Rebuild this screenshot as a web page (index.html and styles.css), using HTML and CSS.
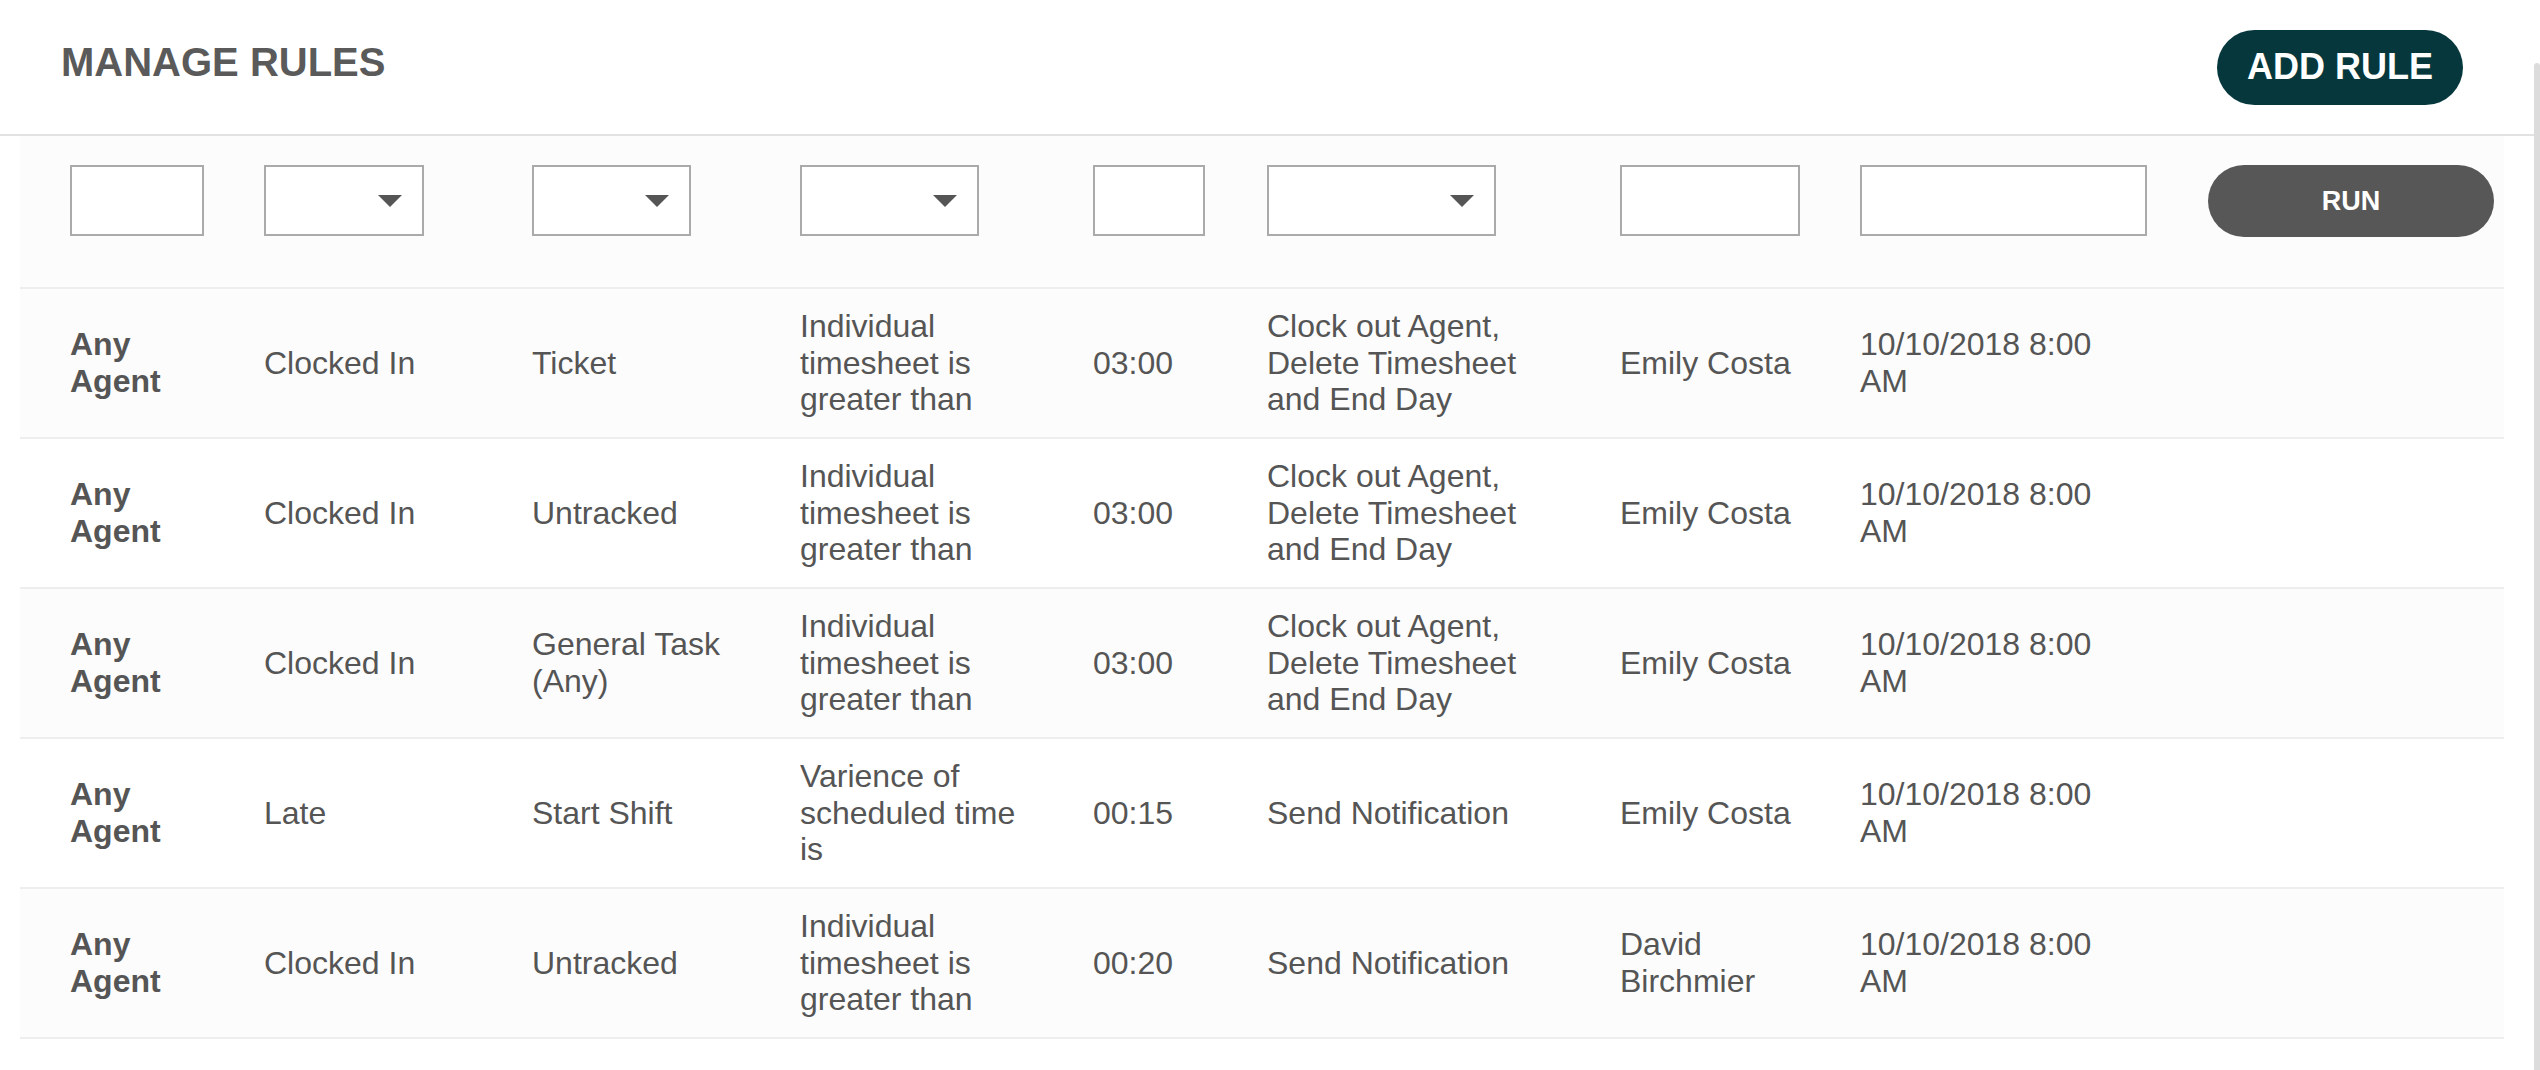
FILE: index.html
```html
<!DOCTYPE html>
<html lang="en">
<head>
    <meta charset="UTF-8">
    <meta name="viewport" content="width=device-width, initial-scale=1.0">
    <title>Manage Rules</title>
    <link rel="stylesheet" href="styles.css">
</head>
<body>
    <div class="page">
        <header class="page-header">
            <h1>MANAGE RULES</h1>
            <button class="add-btn">ADD RULE</button>
        </header>

        <main class="rules">
            <div class="rule-row filters">
                <input type="text" class="field f-agent">
                <span class="select-wrap f-status"><select class="field"></select></span>
                <span class="select-wrap f-type"><select class="field"></select></span>
                <span class="select-wrap f-cond"><select class="field"></select></span>
                <input type="text" class="field f-time">
                <span class="select-wrap f-action"><select class="field"></select></span>
                <input type="text" class="field f-user">
                <input type="text" class="field f-date">
                <button class="run-btn">RUN</button>
            </div>

            <div class="rule-row">
                <div class="cell agent">Any Agent</div>
                <div class="cell">Clocked In</div>
                <div class="cell">Ticket</div>
                <div class="cell">Individual timesheet is greater than</div>
                <div class="cell">03:00</div>
                <div class="cell">Clock out Agent, Delete Timesheet and End Day</div>
                <div class="cell">Emily Costa</div>
                <div class="cell date">10/10/2018 8:00 AM</div>
            </div>

            <div class="rule-row">
                <div class="cell agent">Any Agent</div>
                <div class="cell">Clocked In</div>
                <div class="cell">Untracked</div>
                <div class="cell">Individual timesheet is greater than</div>
                <div class="cell">03:00</div>
                <div class="cell">Clock out Agent, Delete Timesheet and End Day</div>
                <div class="cell">Emily Costa</div>
                <div class="cell date">10/10/2018 8:00 AM</div>
            </div>

            <div class="rule-row">
                <div class="cell agent">Any Agent</div>
                <div class="cell">Clocked In</div>
                <div class="cell">General Task (Any)</div>
                <div class="cell">Individual timesheet is greater than</div>
                <div class="cell">03:00</div>
                <div class="cell">Clock out Agent, Delete Timesheet and End Day</div>
                <div class="cell">Emily Costa</div>
                <div class="cell date">10/10/2018 8:00 AM</div>
            </div>

            <div class="rule-row">
                <div class="cell agent">Any Agent</div>
                <div class="cell">Late</div>
                <div class="cell">Start Shift</div>
                <div class="cell">Varience of scheduled time is</div>
                <div class="cell">00:15</div>
                <div class="cell">Send Notification</div>
                <div class="cell">Emily Costa</div>
                <div class="cell date">10/10/2018 8:00 AM</div>
            </div>

            <div class="rule-row">
                <div class="cell agent">Any Agent</div>
                <div class="cell">Clocked In</div>
                <div class="cell">Untracked</div>
                <div class="cell">Individual timesheet is greater than</div>
                <div class="cell">00:20</div>
                <div class="cell">Send Notification</div>
                <div class="cell">David Birchmier</div>
                <div class="cell date">10/10/2018 8:00 AM</div>
            </div>
        </main>
    </div>
    <div class="scroll-thumb"></div>
</body>
</html>
```

FILE: styles.css
```css
body {
    margin: 0;
    background: #ffffff;
    color: #555555;
    font-family: "Liberation Sans", Arial, Helvetica, sans-serif;
}
.page {
    margin-right: 6px;
}
.page-header {
    display: flex;
    justify-content: space-between;
    align-items: center;
    height: 134px;
    padding: 0 71px 0 61px;
    border-bottom: 2px solid #e2e2e2;
}
.page-header h1 {
    margin: 0 0 10px 0;
    font-size: 40px;
    line-height: 1;
    font-weight: 700;
    color: #5a5a5a;
}
.add-btn {
    width: 246px;
    height: 75px;
    border: none;
    border-radius: 38px;
    background-color: #05373d;
    color: #ffffff;
    font-family: inherit;
    font-size: 36px;
    font-weight: 700;
    padding: 0;
}
.rules {
    margin: 0 30px 0 20px;
}
.rule-row {
    display: grid;
    grid-template-columns: 194px 268px 268px 293px 174px 353px 240px 348px 286px;
    align-items: center;
    box-sizing: border-box;
    height: 150px;
    padding-left: 50px;
    border-bottom: 2px solid #eeeeee;
}
.rules > .rule-row:nth-child(even) {
    background: #fcfcfc;
}
.filters {
    height: 153px;
    padding-top: 29px;
    padding-bottom: 51px;
    align-items: start;
    background: #fcfcfc;
}
.field {
    display: block;
    box-sizing: border-box;
    height: 71px;
    margin: 0;
    border: 2px solid #aaaaaa;
    border-radius: 0;
    background: #ffffff;
    -webkit-appearance: none;
    appearance: none;
    outline: none;
}
.select-wrap {
    position: relative;
    display: block;
}
.select-wrap .field {
    width: 100%;
}
.select-wrap::after {
    content: "";
    position: absolute;
    top: 30px;
    right: 22px;
    border-left: 12px solid transparent;
    border-right: 12px solid transparent;
    border-top: 12px solid #555555;
}
.f-agent { width: 134px; }
.f-status { width: 160px; }
.f-type { width: 159px; }
.f-cond { width: 179px; }
.f-time { width: 112px; }
.f-action { width: 229px; }
.f-user { width: 180px; }
.f-date { width: 287px; }
.run-btn {
    width: 286px;
    height: 72px;
    border: none;
    border-radius: 36px;
    background-color: #575757;
    color: #ffffff;
    font-family: inherit;
    font-size: 27px;
    font-weight: 700;
}
.cell {
    font-size: 32px;
    line-height: 1.15;
    padding-right: 56px;
}
.agent {
    font-weight: 700;
}
.date {
    padding-right: 90px;
}
.scroll-thumb {
    position: fixed;
    top: 63px;
    right: 0;
    bottom: 0;
    width: 6px;
    background: #dcdcdc;
    border-radius: 3px 3px 0 0;
}
```
